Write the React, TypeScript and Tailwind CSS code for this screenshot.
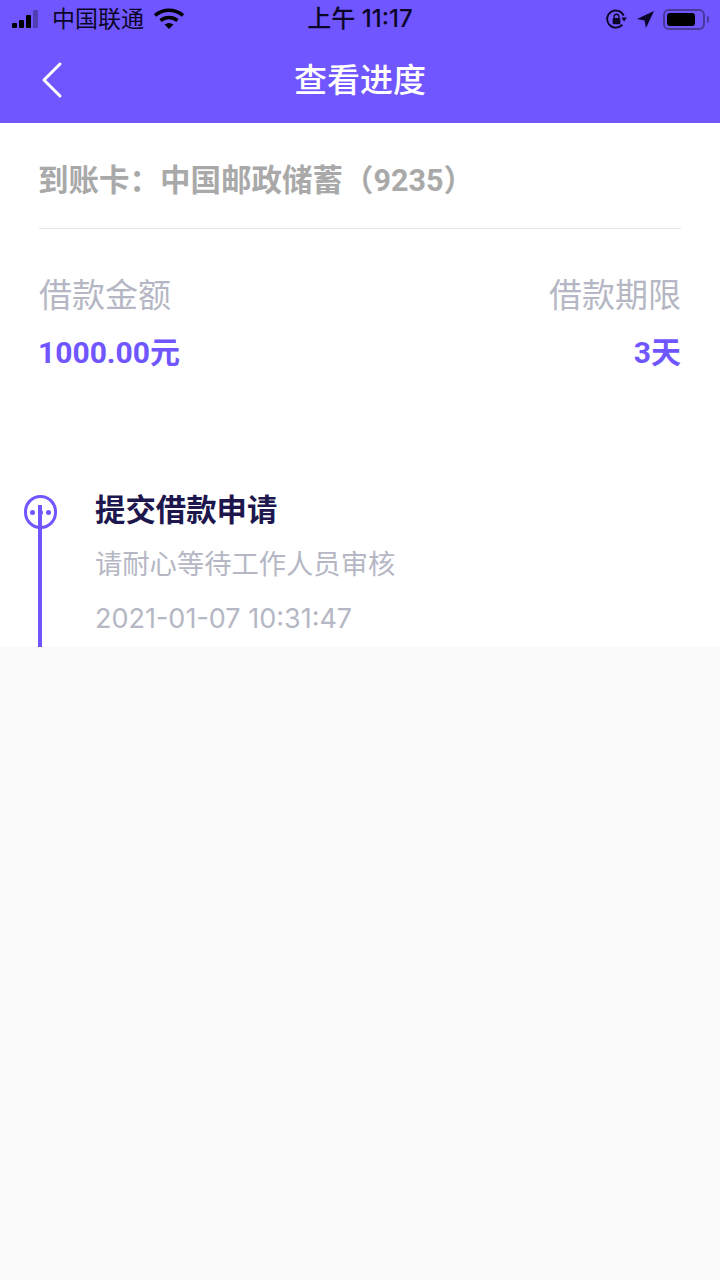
import React from "react";

const font = { fontFamily: '"Inter", "Noto Sans CJK SC", sans-serif' };
const numFont = { fontFamily: '"Roboto", "Noto Sans CJK SC", sans-serif' };

function Status() {
  return (
    <div className="flex h-[38px] items-center justify-between text-[#0b0628]">
      <div className="flex w-[240px] items-center pl-3">
        <div className="flex items-end gap-[2px]">
          <span className="h-[5px] w-[5px] rounded-[1px] bg-black" />
          <span className="h-[8px] w-[5px] rounded-[1px] bg-black" />
          <span className="h-[13px] w-[5px] rounded-[1px] bg-black" />
          <span className="h-[18px] w-[5px] rounded-[1px] bg-[#4f3fb5]" />
        </div>
        <span className="ml-[14px] text-[23px] leading-none">中国联通</span>
        <svg width="30" height="22" viewBox="0 0 30 22" className="ml-[10px]">
          <path d="M1 7.5C9 .5 21 .5 29 7.5" fill="none" stroke="#000" strokeWidth="3.6" />
          <path d="M6.5 12.5c5-4 12-4 17 0" fill="none" stroke="#000" strokeWidth="3.6" />
          <path d="M10.5 16.5c3-2 6-2 9 0L15 21z" fill="#000" />
        </svg>
      </div>
      <span className="text-[24px] font-medium leading-none">上午 11:17</span>
      <div className="flex w-[240px] items-center justify-end pr-[11px]">
        <svg width="21" height="20" viewBox="0 0 22 21">
          <path d="M17 16.5A9 9 0 1 1 18.5 7" fill="none" stroke="#0b0628" strokeWidth="2" />
          <path d="M16 9h6l-3 4z" fill="#0b0628" />
          <rect x="7" y="9.5" width="8" height="6.5" rx="1" fill="#0b0628" />
          <path d="M8.5 10V8a2.5 2.5 0 0 1 5 0v2" fill="none" stroke="#0b0628" strokeWidth="1.4" />
        </svg>
        <svg width="19" height="19" viewBox="0 0 20 20" className="ml-[9px]">
          <path d="M19 1 1 9.5l8 1.5 1.5 8z" fill="#0b0628" />
        </svg>
        <div className="ml-[8px] flex h-[21px] w-[42px] items-center rounded-[6px] border-2 border-[#453a9c] p-[2px]">
          <div className="h-[13px] w-[28px] rounded-[3px] bg-black" />
        </div>
        <div className="ml-[2px] h-[7px] w-[2px] rounded-r-sm bg-[#453a9c]" />
      </div>
    </div>
  );
}

export default function App() {
  return (
    <div className="flex h-[1280px] w-[720px] flex-col overflow-hidden bg-[#fafafa]" style={font}>
      <header className="h-[123px] bg-[#7056ff]">
        <Status />
        <div className="relative flex h-[85px] items-center justify-center">
          <svg width="24" height="38" viewBox="0 0 24 38" className="absolute left-[40px] top-[23px]">
            <path d="M20 3 4 19l16 16" fill="none" stroke="#fff" strokeWidth="3" strokeLinecap="round" strokeLinejoin="round" />
          </svg>
          <h1 className="text-[33px] font-medium leading-none text-white">查看进度</h1>
        </div>
      </header>
      <main className="h-[524px] overflow-hidden bg-white px-[39px]">
        <div className="flex h-[106px] items-center border-b border-[#e6e6ea] pt-[10px] text-[30.5px] font-bold text-[#a9a9a9]" style={numFont}>
          <span className="-ml-px">到账卡：中国邮政储蓄（9235）</span>
        </div>
        <div className="flex justify-between pt-[46px]">
          <div>
            <div className="text-[33px] leading-10 text-[#b5b7c4]">借款金额</div>
            <div className="-ml-px mt-[18px] text-[30px] font-bold leading-10 text-[#7056ff]" style={numFont}>1000.00元</div>
          </div>
          <div className="text-right">
            <div className="text-[33px] leading-10 text-[#b5b7c4]">借款期限</div>
            <div className="mt-[18px] text-[30px] font-bold leading-10 text-[#7056ff]" style={numFont}>3天</div>
          </div>
        </div>
        <div className="mt-[103px] -ml-[15px] flex">
          <div className="relative h-[176px] w-[32px] shrink-0">
            <div className="absolute left-0 top-[19px] flex h-[34px] w-[33px] items-center justify-center gap-[3px] rounded-full border-[3px] border-[#7056ff]">
              <span className="h-[5px] w-[5px] rounded-full bg-[#7056ff]" />
              <span className="h-[5px] w-[5px] rounded-full bg-[#7056ff]" />
              <span className="h-[5px] w-[5px] rounded-full bg-[#7056ff]" />
            </div>
            <div className="absolute left-[14px] top-[29px] h-[147px] w-[4px] bg-[#7056ff]" />
          </div>
          <div className="ml-[39px] pt-[14px]">
            <div className="text-[30.4px] font-bold leading-10 text-[#1d174d]">提交借款申请</div>
            <div className="mt-[15px] text-[27.3px] leading-10 text-[#b5b7c4]">请耐心等待工作人员审核</div>
            <div className="mt-[14px] text-[27px] leading-10 text-[#b5b7c4]">2021-01-07 10:31:47</div>
          </div>
        </div>
      </main>
    </div>
  );
}
